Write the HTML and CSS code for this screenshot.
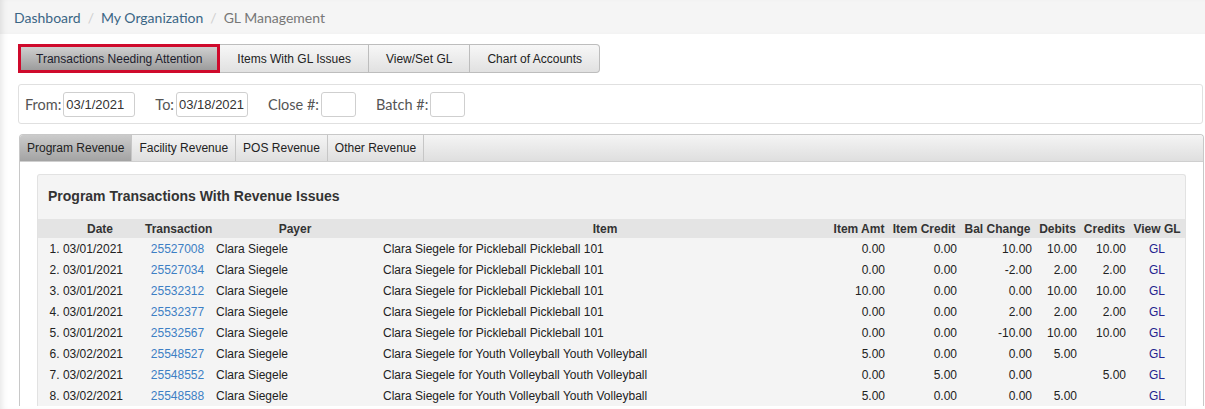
FILE: index.html
```html
<!DOCTYPE html>
<html>
<head>
<meta charset="utf-8">
<link rel="stylesheet" href="styles.css">
</head>
<body>
<div class="page">
  <div class="breadcrumb">
    <a class="crumb" href="#">Dashboard</a><span class="sep">/</span><a class="crumb" href="#">My Organization</a><span class="sep">/</span><span class="current">GL Management</span>
  </div>
  <div class="content">
    <div class="btn-group">
      <button class="btn btn-active">Transactions Needing Attention</button><button class="btn">Items With GL Issues</button><button class="btn">View/Set GL</button><button class="btn btn-last">Chart of Accounts</button>
    </div>
    <div class="filters">
      <label class="flabel">From:</label><input class="finput w-date" value="03/1/2021">
      <label class="flabel gap">To:</label><input class="finput w-date" value="03/18/2021">
      <label class="flabel gap">Close #:</label><input class="finput w-num" value="">
      <label class="flabel gap">Batch #:</label><input class="finput w-num" value="">
    </div>
    <div class="tabs">
      <div class="tabbar">
        <div class="tab tab-active">Program Revenue</div><div class="tab">Facility Revenue</div><div class="tab">POS Revenue</div><div class="tab">Other Revenue</div>
      </div>
      <div class="tabbody">
        <div class="box">
          <div class="box-title">Program Transactions With Revenue Issues</div>
          <table class="grid">
            <colgroup>
              <col style="width:107px"><col style="width:65px"><col style="width:170px"><col style="width:450px"><col style="width:58px"><col style="width:72px"><col style="width:75px"><col style="width:45px"><col style="width:49px"><col style="width:56px">
            </colgroup>
            <thead>
              <tr><th class="h-date">Date</th><th>Transaction</th><th>Payer</th><th>Item</th><th>Item Amt</th><th>Item Credit</th><th>Bal Change</th><th>Debits</th><th>Credits</th><th>View GL</th></tr>
            </thead>
            <tbody>
              <tr><td class="c-date">1. 03/01/2021</td><td class="c-ctr"><a class="tlink" href="#">25527008</a></td><td class="c-left">Clara Siegele</td><td class="c-item">Clara Siegele for Pickleball Pickleball 101</td><td class="c-num">0.00</td><td class="c-num">0.00</td><td class="c-num">10.00</td><td class="c-num">10.00</td><td class="c-num">10.00</td><td class="c-ctr"><a class="gl" href="#">GL</a></td></tr>
              <tr><td class="c-date">2. 03/01/2021</td><td class="c-ctr"><a class="tlink" href="#">25527034</a></td><td class="c-left">Clara Siegele</td><td class="c-item">Clara Siegele for Pickleball Pickleball 101</td><td class="c-num">0.00</td><td class="c-num">0.00</td><td class="c-num">-2.00</td><td class="c-num">2.00</td><td class="c-num">2.00</td><td class="c-ctr"><a class="gl" href="#">GL</a></td></tr>
              <tr><td class="c-date">3. 03/01/2021</td><td class="c-ctr"><a class="tlink" href="#">25532312</a></td><td class="c-left">Clara Siegele</td><td class="c-item">Clara Siegele for Pickleball Pickleball 101</td><td class="c-num">10.00</td><td class="c-num">0.00</td><td class="c-num">0.00</td><td class="c-num">10.00</td><td class="c-num">10.00</td><td class="c-ctr"><a class="gl" href="#">GL</a></td></tr>
              <tr><td class="c-date">4. 03/01/2021</td><td class="c-ctr"><a class="tlink" href="#">25532377</a></td><td class="c-left">Clara Siegele</td><td class="c-item">Clara Siegele for Pickleball Pickleball 101</td><td class="c-num">0.00</td><td class="c-num">0.00</td><td class="c-num">2.00</td><td class="c-num">2.00</td><td class="c-num">2.00</td><td class="c-ctr"><a class="gl" href="#">GL</a></td></tr>
              <tr><td class="c-date">5. 03/01/2021</td><td class="c-ctr"><a class="tlink" href="#">25532567</a></td><td class="c-left">Clara Siegele</td><td class="c-item">Clara Siegele for Pickleball Pickleball 101</td><td class="c-num">0.00</td><td class="c-num">0.00</td><td class="c-num">-10.00</td><td class="c-num">10.00</td><td class="c-num">10.00</td><td class="c-ctr"><a class="gl" href="#">GL</a></td></tr>
              <tr><td class="c-date">6. 03/02/2021</td><td class="c-ctr"><a class="tlink" href="#">25548527</a></td><td class="c-left">Clara Siegele</td><td class="c-item">Clara Siegele for Youth Volleyball Youth Volleyball</td><td class="c-num">5.00</td><td class="c-num">0.00</td><td class="c-num">0.00</td><td class="c-num">5.00</td><td class="c-num"></td><td class="c-ctr"><a class="gl" href="#">GL</a></td></tr>
              <tr><td class="c-date">7. 03/02/2021</td><td class="c-ctr"><a class="tlink" href="#">25548552</a></td><td class="c-left">Clara Siegele</td><td class="c-item">Clara Siegele for Youth Volleyball Youth Volleyball</td><td class="c-num">0.00</td><td class="c-num">5.00</td><td class="c-num">0.00</td><td class="c-num"></td><td class="c-num">5.00</td><td class="c-ctr"><a class="gl" href="#">GL</a></td></tr>
              <tr><td class="c-date">8. 03/02/2021</td><td class="c-ctr"><a class="tlink" href="#">25548588</a></td><td class="c-left">Clara Siegele</td><td class="c-item">Clara Siegele for Youth Volleyball Youth Volleyball</td><td class="c-num">5.00</td><td class="c-num">0.00</td><td class="c-num">0.00</td><td class="c-num">5.00</td><td class="c-num"></td><td class="c-ctr"><a class="gl" href="#">GL</a></td></tr>
            </tbody>
          </table>
        </div>
      </div>
    </div>
  </div>
</div>
</body>
</html>
```
FILE: styles.css
```css
html, body {
  margin: 0;
  padding: 0;
  background: #fff;
}
.page {
  min-height: 409px;
  box-shadow: inset 6px 0 6px -4px rgba(0, 0, 0, 0.10);
  font-family: "Liberation Sans", Arial, sans-serif;
  color: #222;
}
.breadcrumb {
  height: 34px;
  background: #f5f5f5;
  box-shadow: inset 6px 0 6px -4px rgba(0, 0, 0, 0.10);
  font-family: Lato, "Liberation Sans", sans-serif;
  font-size: 14px;
  line-height: 35px;
  padding-left: 14px;
}
.crumb {
  color: #3b6685;
  text-decoration: none;
}
.sep {
  color: #cfcfcf;
  padding: 0 7px;
}
.current {
  color: #777;
}
.content {
  padding: 10px 1px 0 18px;
}
.btn-group {
  display: flex;
  height: 29px;
}
.btn {
  font-family: "Liberation Sans", Arial, sans-serif;
  font-size: 12px;
  color: #222;
  height: 29px;
  padding: 0 17px;
  margin: 0;
  border: 1px solid #bdbdbd;
  border-left: none;
  background: linear-gradient(#f7f7f7, #e1e1e1);
  cursor: pointer;
}
.btn-active {
  border: 3px solid #cf0a2c;
  padding: 0 15px;
  background: linear-gradient(#cfcfcf, #9c9c9c);
  color: #1c1c2c;
}
.btn-last {
  border-radius: 0 4px 4px 0;
}
.filters {
  margin-top: 11px;
  margin-right: 1px;
  height: 38px;
  border: 1px solid #e0e0e0;
  border-radius: 3px;
  display: flex;
  align-items: center;
  padding-left: 6px;
  font-family: Lato, "Liberation Sans", sans-serif;
  font-size: 14.5px;
  color: #555;
}
.flabel {
  margin-right: 2px;
}
.flabel.gap {
  margin-left: 20px;
}
.finput {
  height: 25px;
  box-sizing: border-box;
  border: 1px solid #cfcfcf;
  border-radius: 3px;
  font-family: "Liberation Sans", Arial, sans-serif;
  font-size: 13px;
  color: #333;
  padding: 0 2px;
  margin: 0;
}
.w-date { width: 72px; }
.w-num { width: 35px; }
.tabs {
  margin-top: 10px;
  margin-left: 1px;
  border: 1px solid #c8c8c8;
  border-radius: 4px 4px 0 0;
  border-bottom: none;
}
.tabbar {
  height: 26px;
  background: linear-gradient(#f4f4f4, #dfdfdf);
  border-bottom: 1px solid #cfcfcf;
  border-radius: 4px 4px 0 0;
  display: flex;
}
.tab {
  font-size: 12px;
  line-height: 26px;
  padding: 0 7px;
  border-right: 1px solid #c6c6c6;
  color: #222;
}
.tab-active {
  background: linear-gradient(#cbcbcb, #a3a3a3);
  border-radius: 3px 0 0 0;
}
.tabbody {
  padding: 12px 17px 0 17px;
}
.box {
  background: #f4f4f4;
  border: 1px solid #e2e2e2;
  border-bottom: none;
  border-radius: 3px 3px 0 0;
}
.box-title {
  font-size: 14px;
  font-weight: bold;
  color: #333;
  height: 44px;
  line-height: 42px;
  padding-left: 10px;
}
.grid {
  border-collapse: collapse;
  table-layout: fixed;
  width: 1147px;
  font-size: 12px;
}
.grid th {
  background: #e4e4e4;
  height: 19px;
  padding: 0;
  font-weight: bold;
  color: #333;
  text-align: center;
  white-space: nowrap;
}
.grid th.h-date {
  padding-left: 17px;
}
.grid td {
  height: 21px;
  padding: 0;
  white-space: nowrap;
  color: #222;
}
.c-date {
  text-align: right;
  padding-right: 22px !important;
}
.c-ctr {
  text-align: center;
}
.c-left {
  padding-left: 6px !important;
}
.c-item {
  padding-left: 3px !important;
}
.c-num {
  text-align: right;
  padding-right: 3px !important;
}
.tlink {
  color: #3d7fc4;
  text-decoration: none;
}
.gl {
  color: #23238f;
  text-decoration: none;
}
```
